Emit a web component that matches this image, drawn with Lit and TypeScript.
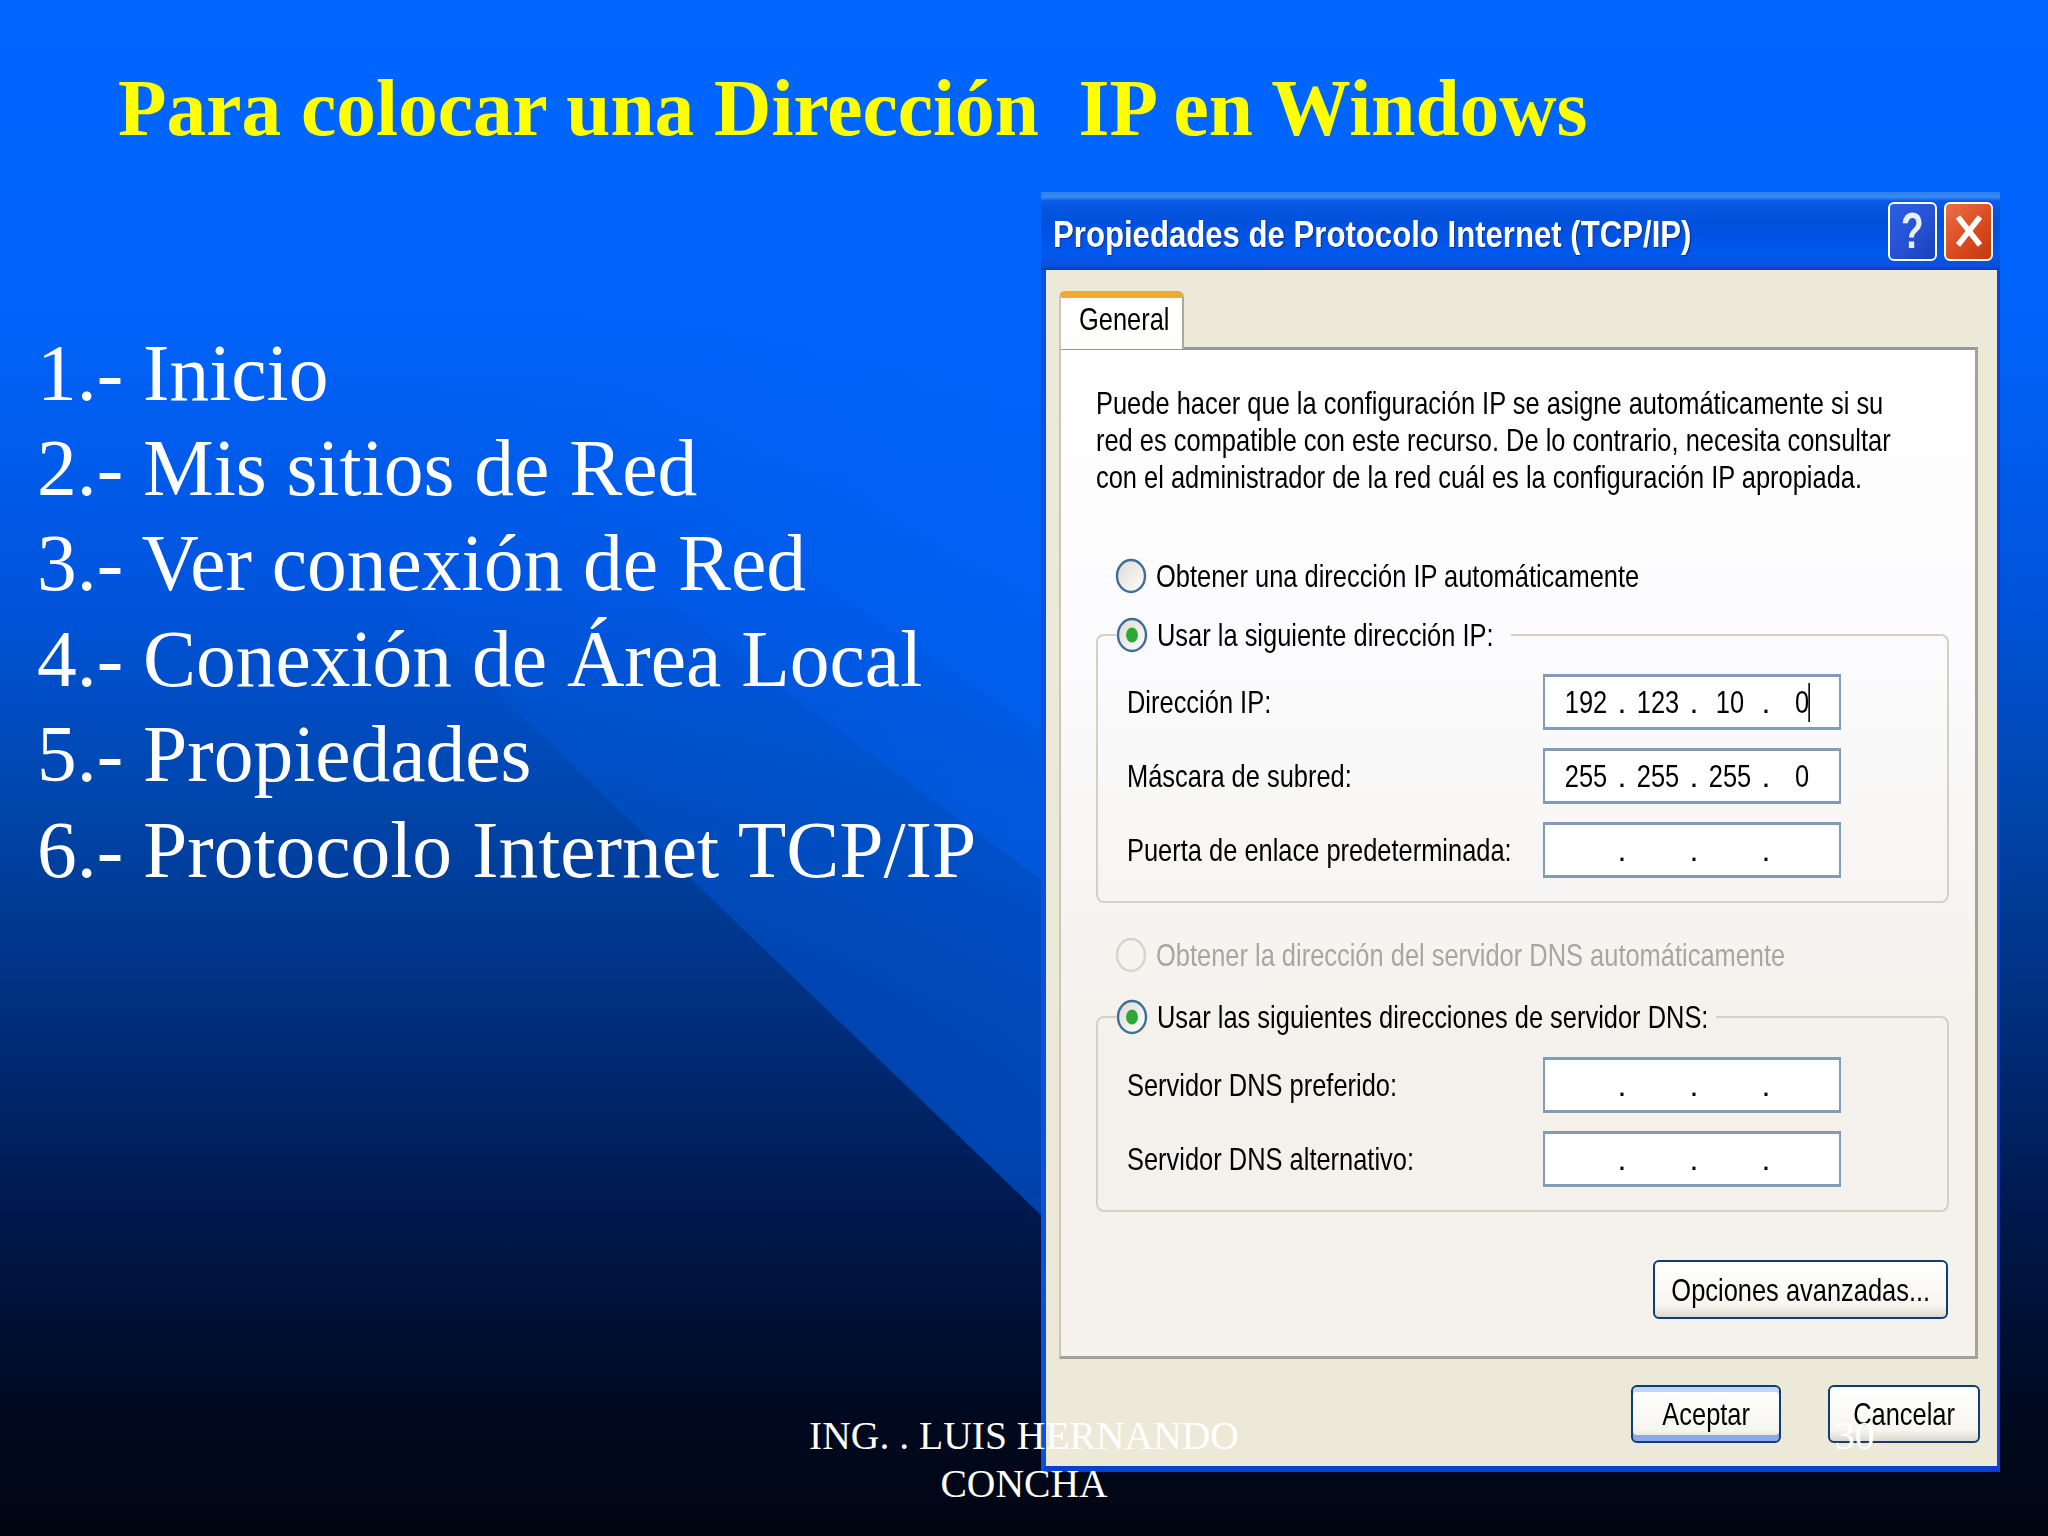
import { LitElement, html, css, svg } from "lit";
import { customElement } from "lit/decorators.js";

const radio = (checked: boolean, disabled = false) => html`<svg class="radio" viewBox="0 0 32 36" aria-hidden="true">
  <defs><linearGradient id="rg" x1="0" y1="0" x2="1" y2="1"><stop offset="0" stop-color="#dcdad0"/><stop offset="1" stop-color="#ffffff"/></linearGradient></defs>
  <ellipse cx="16" cy="18" rx="14" ry="16" fill="${disabled ? "#f6f4ef" : "url(#rg)"}" stroke="${disabled ? "#d6d4cb" : "#3f6e98"}" stroke-width="2.4"/>
  ${checked ? svg`<ellipse cx="16" cy="18" rx="6" ry="7.5" fill="#2fa83a"/>` : ""}
</svg>`;

const field = (v: string[], caret = false) => html`<div class="field">
  ${[0, 1, 2, 3].map(i => html`<span class="cell ${caret && i === 3 ? "caret" : ""}">${v[i] ?? ""}</span>${i < 3 ? html`<span class="dot">.</span>` : ""}`)}
</div>`;

const row = (label: string, v: string[], caret = false) => html`<div class="row"><span class="t">${label}</span>${field(v, caret)}</div>`;

@customElement("app-root")
export class AppRoot extends LitElement {
  static styles = css`
    :host { display: block; width: 2048px; height: 1536px; position: relative; overflow: hidden;
      background: linear-gradient(180deg, #0066ff 0, #0064fb 300px, #0054dc 600px, #0046ac 800px, #003080 1000px, #001a50 1200px, #000a22 1400px, #000510 1536px);
      font-family: "Liberation Serif", "Times New Roman", serif; }
    .beams { position: absolute; inset: 0; width: 2048px; height: 1536px; }
    .slide { position: relative; display: grid; grid-template-columns: 1041px 959px; grid-template-rows: 192px 1fr; height: 1536px; }
    h1 { grid-column: 1 / 3; margin: 0; padding: 64px 0 0 118px; font-size: 79.4px; line-height: 88px; font-weight: 700; color: #ffff00; white-space: pre; }
    ol { list-style: none; margin: 0; padding: 133.5px 0 0 37px; font-size: 79.5px; line-height: 95.4px; color: #fff; white-space: nowrap; }

    .dlg { height: 1280px; display: flex; flex-direction: column; font-family: "Liberation Sans", Arial, sans-serif; color: #000; font-size: 32px; filter: blur(0.55px); }
    .bar { height: 78px; flex: none; display: flex; align-items: center; justify-content: space-between; padding: 0 7px 0 12px; box-sizing: border-box;
      background: linear-gradient(180deg, #2f80ee 0, #3b8af2 5px, #0a5ae6 9px, #0050dc 30px, #0058ee 62px, #0a50dc 74px, #0a3cc0 78px); color: #fff; }
    .bar .t { font-weight: 700; font-size: 36px; transform: scaleX(.865); margin-top: 7px; text-shadow: 1px 1px 1px #0a2a90; }
    .btns { display: flex; gap: 7px; }
    .wb { width: 49px; height: 59px; box-sizing: border-box; border: 2px solid #fff; border-radius: 6px; display: flex; align-items: center; justify-content: center; color: #fff; font-weight: 700; font-size: 50px; }
    .wb span { display: block; transform: scaleX(.74); opacity: .9; }
    .help { background: linear-gradient(135deg, #2a5fe6, #2550d0 60%, #1a40b8); }
    .close { background: linear-gradient(135deg, #e8704a, #d8481c 60%, #c03a10); }
    .close svg { width: 28px; height: 34px; }

    .body { flex: 1; display: flex; flex-direction: column; background: #ece9d8; border-left: 5px solid #0a50e4; border-right: 3px solid #0a46d8; border-bottom: 6px solid #0a40d0; padding: 21px 19px 0 13px; }
    .tab { width: 125px; height: 58px; box-sizing: border-box; background: linear-gradient(180deg, #fff, #fdfdfb); border-top: 7px solid #f2a92f; border-left: 2px solid #c9c7b8; border-right: 2px solid #a9a99c; border-radius: 6px 6px 0 0; margin-bottom: -2px; position: relative; z-index: 1; display: flex; align-items: center; padding: 0 0 10px 18px; }
    .panel { height: 1012px; box-sizing: border-box; border-top: 3px solid #94989a; border-left: 2px solid #c9c7b8; border-right: 3px solid #a3a39a; border-bottom: 3px solid #a3a39a; padding: 35px 25px 0 35px; background: linear-gradient(180deg, #ffffff 0, #fbfbfd 30%, #f4f1ec 70%, #f5f2ee 100%); }
    .t { display: inline-block; white-space: nowrap; transform: scaleX(.795); transform-origin: left center; line-height: 36px; }
    .intro { display: flex; flex-direction: column; gap: 1px; }
    .radio { width: 32px; height: 36px; flex: none; }
    .opt { display: flex; align-items: center; gap: 9px; margin-left: 19px; height: 36px; }
    .first { margin-top: 63px; margin-bottom: 23px; }
    .off { color: #a8a79e; margin-top: 34px; margin-bottom: 26px; }
    fieldset { margin: 0; padding: 21px 27px 23px 29px; border: 2px solid #d3d1c2; border-radius: 8px; box-sizing: border-box; width: 853px; display: flex; flex-direction: column; gap: 18px; min-width: 0; }
    .dns { padding-top: 22px; }
    legend { padding: 0; margin-left: -11px; height: 36px; display: flex; align-items: center; gap: 9px; }
    .l1 { width: 395px; }
    .l2 { width: 600px; }
    .row { display: grid; grid-template-columns: 416px 298px; align-items: center; }
    .field { height: 56px; box-sizing: border-box; border: 2px solid #7f9db9; border-top-width: 3px; border-bottom-width: 3px; background: #fff; display: flex; align-items: center; padding-left: 11px; }
    .cell { width: 60px; text-align: center; transform: scaleX(.795); }
    .dot { width: 12px; text-align: center; }
    .caret { position: relative; }
    .caret::after { content: ""; position: absolute; right: 20px; top: -1px; bottom: -1px; width: 2px; background: #000; }
    .xpb { box-sizing: border-box; display: flex; align-items: center; justify-content: center; border: 2px solid #0d3e74; border-radius: 6px; background: linear-gradient(180deg, #fff 0, #f6f5ef 80%, #dcd8cc 100%); }
    .xpb .t { transform-origin: center; }
    .adv { width: 295px; height: 59px; margin: 48px 2px 0 auto; }
    .foot { display: flex; justify-content: flex-end; gap: 47px; margin: 26px -2px 0 0; }
    .foot .xpb { width: 150px; height: 58px; }
    .foot .xpb.cancel { width: 152px; }
    .ok { box-shadow: inset 0 5px 0 #c0d6f6, inset 0 -6px 0 #8aa8ea; }

    .credit { position: absolute; left: 0; right: 0; top: 1412px; text-align: center; color: #fff; font-size: 39.6px; line-height: 48px; }
    .num { position: absolute; left: 1835px; top: 1412px; color: #fff; font-size: 39.6px; line-height: 48px; }
  `;

  render() {
    return html`
      <svg class="beams" viewBox="0 0 2048 1536" aria-hidden="true">
        <defs>
          <linearGradient id="fa" gradientUnits="userSpaceOnUse" x1="350" y1="450" x2="1040" y2="1100"><stop offset="0" stop-color="#0066ff" stop-opacity="0"/><stop offset="1" stop-color="#0066ff" stop-opacity=".52"/></linearGradient>
          <linearGradient id="fb" gradientUnits="userSpaceOnUse" x1="500" y1="400" x2="1040" y2="800"><stop offset="0" stop-color="#0066ff" stop-opacity="0"/><stop offset="1" stop-color="#0066ff" stop-opacity=".32"/></linearGradient>
        </defs>
        <polygon points="200,408 1041,1215 1041,192 500,192" fill="url(#fa)"/>
        <polygon points="300,332 1041,880 1041,192 500,192" fill="url(#fb)"/>
        <polygon points="600,430 1041,733 1041,192 700,192" fill="url(#fb)"/>
        <polygon points="600,367 1041,600 1041,192 800,192" fill="url(#fb)"/>
      </svg>
      <div class="slide">
        <h1>Para colocar una Dirección  IP en Windows</h1>
        <ol>
          <li>1.- Inicio</li>
          <li>2.- Mis sitios de Red</li>
          <li>3.- Ver conexión de Red</li>
          <li>4.- Conexión de Área Local</li>
          <li>5.- Propiedades</li>
          <li>6.- Protocolo Internet TCP/IP</li>
        </ol>
        <section class="dlg">
          <header class="bar">
            <span class="t">Propiedades de Protocolo Internet (TCP/IP)</span>
            <div class="btns">
              <div class="wb help"><span>?</span></div>
              <div class="wb close"><svg viewBox="0 0 28 34"><path d="M3 3 L25 31 M25 3 L3 31" stroke="#fff" stroke-width="5.5" fill="none"/></svg></div>
            </div>
          </header>
          <div class="body">
            <div class="tab"><span class="t">General</span></div>
            <div class="panel">
              <div class="intro">
                <span class="t">Puede hacer que la configuración IP se asigne automáticamente si su</span>
                <span class="t">red es compatible con este recurso. De lo contrario, necesita consultar</span>
                <span class="t">con el administrador de la red cuál es la configuración IP apropiada.</span>
              </div>
              <div class="opt first">${radio(false)}<span class="t">Obtener una dirección IP automáticamente</span></div>
              <fieldset>
                <legend class="l1">${radio(true)}<span class="t">Usar la siguiente dirección IP:</span></legend>
                ${row("Dirección IP:", ["192", "123", "10", "0"], true)}
                ${row("Máscara de subred:", ["255", "255", "255", "0"])}
                ${row("Puerta de enlace predeterminada:", [])}
              </fieldset>
              <div class="opt off">${radio(false, true)}<span class="t">Obtener la dirección del servidor DNS automáticamente</span></div>
              <fieldset class="dns">
                <legend class="l2">${radio(true)}<span class="t">Usar las siguientes direcciones de servidor DNS:</span></legend>
                ${row("Servidor DNS preferido:", [])}
                ${row("Servidor DNS alternativo:", [])}
              </fieldset>
              <div class="xpb adv"><span class="t">Opciones avanzadas...</span></div>
            </div>
            <div class="foot">
              <div class="xpb ok"><span class="t">Aceptar</span></div>
              <div class="xpb cancel"><span class="t">Cancelar</span></div>
            </div>
          </div>
        </section>
      </div>
      <div class="credit">ING. . LUIS HERNANDO<br>CONCHA</div>
      <div class="num">30</div>
    `;
  }
}
